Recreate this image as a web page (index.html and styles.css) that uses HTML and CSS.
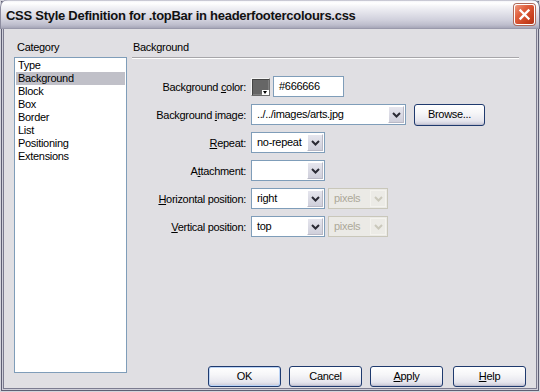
FILE: index.html
```html
<!DOCTYPE html>
<html>
<head>
<meta charset="utf-8">
<title>CSS Style Definition</title>
<link rel="stylesheet" href="styles.css">
</head>
<body>
<div class="window">
  <div class="titlebar">
    <span class="title">CSS Style Definition for .topBar in headerfootercolours.css</span>
    <span class="close"><svg width="19" height="19" viewBox="0 0 19 19"><path d="M5.5 5.5L13.5 13.5M13.5 5.5L5.5 13.5" stroke="#fff" stroke-width="2.3" stroke-linecap="square"/></svg></span>
  </div>
  <div class="client">
    <div class="category">
      <div class="cat-label">Category</div>
      <ul class="cat-list">
        <li>Type</li>
        <li class="sel">Background</li>
        <li>Block</li>
        <li>Box</li>
        <li>Border</li>
        <li>List</li>
        <li>Positioning</li>
        <li>Extensions</li>
      </ul>
    </div>
    <div class="panel">
      <div class="panel-head">Background</div>
      <div class="form">
        <div class="lbl">Background <u>c</u>olor:</div>
        <div class="ctrl">
          <span class="swatch"><span class="swatch-tri"></span></span>
          <span class="textbox">#666666</span>
        </div>

        <div class="lbl">Background <u>i</u>mage:</div>
        <div class="ctrl gap8">
          <span class="combo w155"><span class="val">../../images/arts.jpg</span><span class="arrow"><svg width="9" height="6" viewBox="0 0 9 6"><path d="M1 1L4.5 4.5L8 1" fill="none" stroke="#2b2b35" stroke-width="2"/></svg></span></span>
          <span class="btn browse">Browse...</span>
        </div>

        <div class="lbl"><u>R</u>epeat:</div>
        <div class="ctrl">
          <span class="combo w74"><span class="val">no-repeat</span><span class="arrow"><svg width="9" height="6" viewBox="0 0 9 6"><path d="M1 1L4.5 4.5L8 1" fill="none" stroke="#2b2b35" stroke-width="2"/></svg></span></span>
        </div>

        <div class="lbl">A<u>t</u>tachment:</div>
        <div class="ctrl">
          <span class="combo w74"><span class="val"></span><span class="arrow"><svg width="9" height="6" viewBox="0 0 9 6"><path d="M1 1L4.5 4.5L8 1" fill="none" stroke="#2b2b35" stroke-width="2"/></svg></span></span>
        </div>

        <div class="lbl"><u>H</u>orizontal position:</div>
        <div class="ctrl">
          <span class="combo w74"><span class="val">right</span><span class="arrow"><svg width="9" height="6" viewBox="0 0 9 6"><path d="M1 1L4.5 4.5L8 1" fill="none" stroke="#2b2b35" stroke-width="2"/></svg></span></span>
          <span class="combo w60 disabled"><span class="val">pixels</span><span class="arrow"><svg width="9" height="6" viewBox="0 0 9 6"><path d="M1 1L4.5 4.5L8 1" fill="none" stroke="#cac8bb" stroke-width="2"/></svg></span></span>
        </div>

        <div class="lbl"><u>V</u>ertical position:</div>
        <div class="ctrl">
          <span class="combo w74"><span class="val">top</span><span class="arrow"><svg width="9" height="6" viewBox="0 0 9 6"><path d="M1 1L4.5 4.5L8 1" fill="none" stroke="#2b2b35" stroke-width="2"/></svg></span></span>
          <span class="combo w60 disabled"><span class="val">pixels</span><span class="arrow"><svg width="9" height="6" viewBox="0 0 9 6"><path d="M1 1L4.5 4.5L8 1" fill="none" stroke="#cac8bb" stroke-width="2"/></svg></span></span>
        </div>
      </div>
      <div class="actions">
        <span class="btn default">OK</span>
        <span class="btn">Cancel</span>
        <span class="btn"><u>A</u>pply</span>
        <span class="btn help"><u>H</u>elp</span>
      </div>
    </div>
  </div>
</div>
</body>
</html>
```
FILE: styles.css
```css
html, body {
  margin: 0;
  padding: 0;
  background: #e0dfe3;
}

body {
  font-family: "Liberation Sans", Arial, sans-serif;
  font-size: 11px;
  letter-spacing: -0.3px;
  color: #000;
}

.window {
  width: 540px;
  height: 392px;
  box-sizing: border-box;
  display: flex;
  flex-direction: column;
  background: #e0dfe3;
  box-shadow:
    inset 0 0 0 1px #d4d4dc,
    inset 0 0 0 2px #5f5f74,
    inset 0 0 0 3px #cfcfd9,
    inset 0 0 0 4px #7c7c90;
}

.titlebar {
  height: 29px;
  flex: none;
  display: flex;
  align-items: center;
  justify-content: space-between;
  padding: 0 5px 0 6px;
  border-radius: 7px 7px 0 0;
  background: linear-gradient(#9d9db0 0, #f4f4f8 1px, #ffffff 3px, #f2f2f6 7px, #e2e2ea 13px, #d0d0dc 20px, #bdbdcc 25px, #a6a6b8 28px, #8c8c9e 29px);
  box-shadow: inset 1px 0 0 #8d8da0, inset -1px 0 0 #6f6f84;
}

.title {
  font-weight: bold;
  font-size: 13px;
  letter-spacing: -0.27px;
  color: #111;
  padding-top: 1px;
  white-space: nowrap;
}

.close {
  width: 21px;
  height: 21px;
  box-sizing: border-box;
  border: 1px solid #ffffff;
  border-radius: 3px;
  background: linear-gradient(135deg, #f09a80 0%, #e0603e 35%, #c8401e 75%, #b03418 100%);
  box-shadow: 0 0 0 1px #b06a5a;
  display: flex;
  align-items: center;
  justify-content: center;
}

.close svg {
  display: block;
}

.client {
  flex: 1;
  display: flex;
  padding: 12px 4px 4px 4px;
  min-height: 0;
}

.category {
  width: 113px;
  margin-left: 10px;
  display: flex;
  flex-direction: column;
  padding-bottom: 15px;
}

.cat-label {
  height: 13px;
  line-height: 13px;
  padding-left: 3px;
  margin-bottom: 3px;
}

.cat-list {
  flex: 1;
  margin: 0;
  padding: 1px;
  list-style: none;
  background: #fff;
  border: 1px solid #7f9db9;
}

.cat-list li {
  height: 13px;
  line-height: 13px;
  padding-left: 2px;
}

.cat-list li.sel {
  background: #c0c0c8;
}

.panel {
  flex: 1;
  margin-left: 5px;
  padding-right: 10px;
  display: flex;
  flex-direction: column;
}

.panel-head {
  height: 13px;
  line-height: 13px;
  padding-left: 1px;
  padding-bottom: 3px;
  margin-right: 7px;
  border-bottom: 1px solid #a7a6aa;
  box-shadow: 0 1px 0 #ffffff;
}

.form {
  margin-top: 18px;
  display: grid;
  grid-template-columns: 114px auto;
  grid-auto-rows: 21px;
  column-gap: 5px;
  row-gap: 7px;
  align-items: center;
}

.lbl {
  text-align: right;
  white-space: nowrap;
}

.ctrl {
  display: flex;
  align-items: center;
  gap: 3px;
}

.ctrl.gap8 {
  gap: 8px;
}

.swatch {
  width: 19px;
  height: 18px;
  box-sizing: border-box;
  border: 1px solid;
  border-color: #f4f4f4 #6a6a6a #6a6a6a #f4f4f4;
  background: #666666;
  box-shadow: inset 1px 1px 0 #444, inset -1px -1px 0 #808080;
  position: relative;
}

.swatch-tri {
  position: absolute;
  right: 0;
  bottom: 0;
  width: 7px;
  height: 5px;
  background: #ffffff;
}

.swatch-tri::after {
  content: "";
  position: absolute;
  left: 1px;
  top: 1px;
  border-left: 2.5px solid transparent;
  border-right: 2.5px solid transparent;
  border-top: 3px solid #000;
}

.textbox {
  width: 71px;
  height: 21px;
  box-sizing: border-box;
  border: 1px solid #7f9db9;
  background: #fff;
  padding-left: 5px;
  line-height: 19px;
}

.combo {
  height: 21px;
  box-sizing: border-box;
  border: 1px solid #7f9db9;
  background: #fff;
  display: flex;
  padding: 1px;
}

.combo.w155 { width: 155px; }
.combo.w74 { width: 74px; }
.combo.w60 { width: 60px; }

.combo .val {
  flex: 1;
  min-width: 0;
  overflow: hidden;
  white-space: nowrap;
  padding-left: 4px;
  line-height: 17px;
}

.combo .arrow {
  width: 16px;
  flex: none;
  box-sizing: border-box;
  border: 1px solid #ffffff;
  border-right-color: #b9b9c6;
  border-bottom-color: #b9b9c6;
  background: linear-gradient(#e6e6ee, #cfcfdb);
  display: flex;
  align-items: center;
  justify-content: center;
}

.combo.disabled {
  border-color: #c9c7ba;
  background: #ebeae6;
}

.combo.disabled .val {
  color: #aca899;
}

.combo.disabled .arrow {
  background: #ecebe6;
  border-color: #f4f3ee;
}

.btn {
  width: 73px;
  height: 21px;
  box-sizing: border-box;
  border: 1px solid #1f3a6e;
  border-radius: 3px;
  background: linear-gradient(#ffffff 0%, #f6f6f8 40%, #e6e6ee 80%, #c8c8d6 100%);
  box-shadow: inset 0 -1px 0 #c0c0d0;
  display: flex;
  align-items: center;
  justify-content: center;
  line-height: 13px;
}

.btn.browse {
  width: 71px;
  height: 22px;
}

.btn.default {
  box-shadow: inset 0 0 0 1px #bcd4f6, inset 0 -1px 0 #9cbcec;
}

.actions {
  margin-top: auto;
  margin-bottom: 1px;
  display: flex;
  justify-content: flex-end;
  gap: 8px;
}

.btn.help {
  margin-left: 2px;
}
```
